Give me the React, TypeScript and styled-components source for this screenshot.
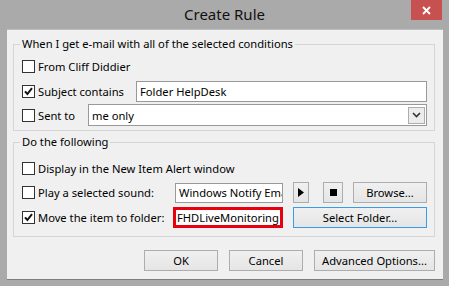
import React from "react";
import styled, {createGlobalStyle} from "styled-components";

const GlobalStyle = createGlobalStyle`
  html, body {
    margin: 0;
    padding: 0;
  }

  body {
    font-family: "Noto Sans", "Open Sans", sans-serif;
    font-size: 11px;
    color: #000;
  }
`

const Frame = styled.div`
  width: 449px;
  height: 286px;
  background: #aaaaaa;
  display: flex;
  flex-direction: column;
  box-sizing: border-box;
`

const TitleBar = styled.div`
  height: 30px;
  display: flex;
  align-items: flex-start;
  justify-content: center;
  position: relative;
`

const Title = styled.div`
  font-size: 15px;
  line-height: 28px;
  color: #111;
`

const CloseButton = styled.div`
  position: absolute;
  top: 0;
  right: 7px;
  width: 31px;
  height: 20px;
  background: #c75050;
  display: flex;
  align-items: center;
  justify-content: center;
`

const Client = styled.div`
  margin: 0 6px 0 7px;
  height: 249px;
  background: #f0f0f0;
  box-shadow: 0 1px 0 #7c7c7c, 0 -1px 0 #bdbdbd;
  display: flex;
  flex-direction: column;
  padding: 0 8px 0 6px;
`

const Group = styled.fieldset<{ $top: number; $bottom: number }>`
  margin: ${p => p.$top}px 0 0 0;
  padding: 0 7px ${p => p.$bottom}px 8px;
  border: 1px solid #d5d5d5;
  min-width: 0;
`

const Legend = styled.legend`
  padding: 0 2px;
  margin-left: -2px;
  line-height: 16px;
  font-size: 11.2px;
`

const Row = styled.div<{ $h: number; $mt?: number }>`
  height: ${p => p.$h}px;
  margin-top: ${p => p.$mt ?? 0}px;
  display: flex;
  align-items: center;
`

const Box = styled.div`
  width: 11px;
  height: 11px;
  border: 1px solid #333;
  background: #fff;
  flex: none;
  display: flex;
  align-items: center;
  justify-content: center;
`

const Label = styled.span<{ $w?: number }>`
  margin-left: 3px;
  width: ${p => (p.$w ? `${p.$w}px` : "auto")};
  flex: none;
  white-space: nowrap;
  font-size: 11.2px;
`

const TextField = styled.div<{ $w?: number; $h?: number; $alert?: boolean }>`
  box-sizing: border-box;
  height: ${p => p.$h ?? 21}px;
  width: ${p => (p.$w ? `${p.$w}px` : "auto")};
  flex: ${p => (p.$w ? "none" : "1")};
  background: #fff;
  border: ${p => (p.$alert ? "3px solid #e8000d" : "1px solid #999")};
  padding: 0 ${p => (p.$alert ? 1 : 3)}px;
  font-size: 11.2px;
  display: flex;
  align-items: center;
  justify-content: space-between;
  white-space: nowrap;
  overflow: hidden;
`

const DropArrow = styled.div`
  width: 15px;
  height: 15px;
  border: 1px solid #adadad;
  background: #ececec;
  margin-right: -2px;
  display: flex;
  align-items: center;
  justify-content: center;
`

const Button = styled.div<{ $w: number; $ml?: number; $default?: boolean }>`
  box-sizing: border-box;
  width: ${p => p.$w}px;
  height: 21px;
  margin-left: ${p => p.$ml ?? 0}px;
  flex: none;
  border: 1px solid ${p => (p.$default ? "#3c9be8" : "#adadad")};
  background: linear-gradient(#f0f0f0, #e5e5e5);
  font-size: 11.2px;
  display: flex;
  align-items: center;
  justify-content: center;
  white-space: nowrap;
`

const Footer = styled.div`
  margin-top: 13px;
  display: flex;
  justify-content: flex-end;
  gap: 11px;
`

function Check({checked}: { checked?: boolean }) {
	return (
		<Box>
			{checked && (
				<svg width="9" height="9" viewBox="0 0 9 9">
					<path d="M1 4.3 L3.4 7 L8 1.2" fill="none" stroke="#111" strokeWidth="2"/>
				</svg>
			)}
		</Box>
	)
}

export default function App(): JSX.Element {
	return (
		<>
			<GlobalStyle/>
			<Frame>
				<TitleBar>
					<Title>Create Rule</Title>
					<CloseButton>
						<svg width="9" height="9" viewBox="0 0 9 9">
							<path d="M1 1 L8 8 M8 1 L1 8" stroke="#fff" strokeWidth="1.8"/>
						</svg>
					</CloseButton>
				</TitleBar>
				<Client>
					<Group $top={6} $bottom={3}>
						<Legend>When I get e-mail with all of the selected conditions</Legend>
						<Row $h={28}>
							<Check/>
							<Label>From Cliff Diddier</Label>
						</Row>
						<Row $h={23}>
							<Check checked/>
							<Label $w={98}>Subject contains</Label>
							<TextField>Folder HelpDesk</TextField>
						</Row>
						<Row $h={24}>
							<Check/>
							<Label $w={50}>Sent to</Label>
							<TextField $h={22}>
								me only
								<DropArrow>
									<svg width="9" height="6" viewBox="0 0 9 6">
										<path d="M1 1 L4.5 4.5 L8 1" fill="none" stroke="#333" strokeWidth="1.6"/>
									</svg>
								</DropArrow>
							</TextField>
						</Row>
					</Group>
					<Group $top={3} $bottom={6}>
						<Legend>Do the following</Legend>
						<Row $h={24} $mt={6}>
							<Check/>
							<Label>Display in the New Item Alert window</Label>
						</Row>
						<Row $h={25}>
							<Check/>
							<Label $w={137}>Play a selected sound:</Label>
							<TextField $w={108} $h={20}>Windows Notify Email.wav</TextField>
							<Button $w={16} $ml={10}>
								<svg width="6" height="9" viewBox="0 0 6 9">
									<path d="M0 0 L6 4.5 L0 9 Z" fill="#000"/>
								</svg>
							</Button>
							<Button $w={20} $ml={14}>
								<svg width="7" height="7" viewBox="0 0 7 7">
									<rect width="7" height="7" fill="#000"/>
								</svg>
							</Button>
							<Button $w={74} $ml={10}>Browse...</Button>
						</Row>
						<Row $h={25}>
							<Check checked/>
							<Label $w={135}>Move the item to folder:</Label>
							<TextField $w={110} $alert>FHDLiveMonitoring</TextField>
							<Button $w={134} $ml={10} $default>Select Folder...</Button>
						</Row>
					</Group>
					<Footer>
						<Button $w={74}>OK</Button>
						<Button $w={74}>Cancel</Button>
						<Button $w={121}>Advanced Options...</Button>
					</Footer>
				</Client>
			</Frame>
		</>
	)
}
